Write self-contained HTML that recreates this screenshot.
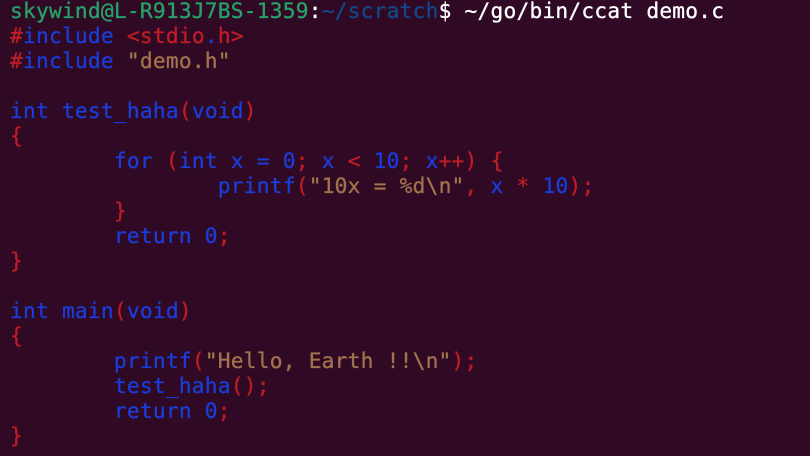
<!DOCTYPE html>
<html><head><meta charset="utf-8"><style>
html,body{margin:0;padding:0;background:#300a24;width:810px;height:456px;overflow:hidden}
pre{margin:0;position:absolute;left:10px;top:-2px;font-family:"DejaVu Sans Mono","Liberation Mono",monospace;font-size:21.2px;line-height:25px;color:#1a3cd8;letter-spacing:0.23px;-webkit-text-stroke:0.3px}
.g{color:#26a269}.w{color:#ffffff}.p{color:#12488b}.r{color:#c01c28}.y{color:#a2734c}
</style></head><body><pre><span class="g">skywind@L-R913J7BS-1359</span><span class="w">:</span><span class="p">~/scratch</span><span class="w">$ ~/go/bin/ccat demo.c</span>
<span class="r">#</span>include <span class="r">&lt;stdio</span>.<span class="r">h&gt;</span>
<span class="r">#</span>include <span class="y">"demo.h"</span>

int test_haha<span class="r">(</span>void<span class="r">)</span>
<span class="r">{</span>
        for <span class="r">(</span>int x = 0<span class="r">;</span> x <span class="r">&lt;</span> 10<span class="r">;</span> x<span class="r">++)</span> <span class="r">{</span>
                printf<span class="r">(</span><span class="y">"10x = %d\n"</span><span class="r">,</span> x <span class="r">*</span> 10<span class="r">);</span>
        <span class="r">}</span>
        return 0<span class="r">;</span>
<span class="r">}</span>

int main<span class="r">(</span>void<span class="r">)</span>
<span class="r">{</span>
        printf<span class="r">(</span><span class="y">"Hello, Earth !!\n"</span><span class="r">);</span>
        test_haha<span class="r">();</span>
        return 0<span class="r">;</span>
<span class="r">}</span></pre></body></html>
